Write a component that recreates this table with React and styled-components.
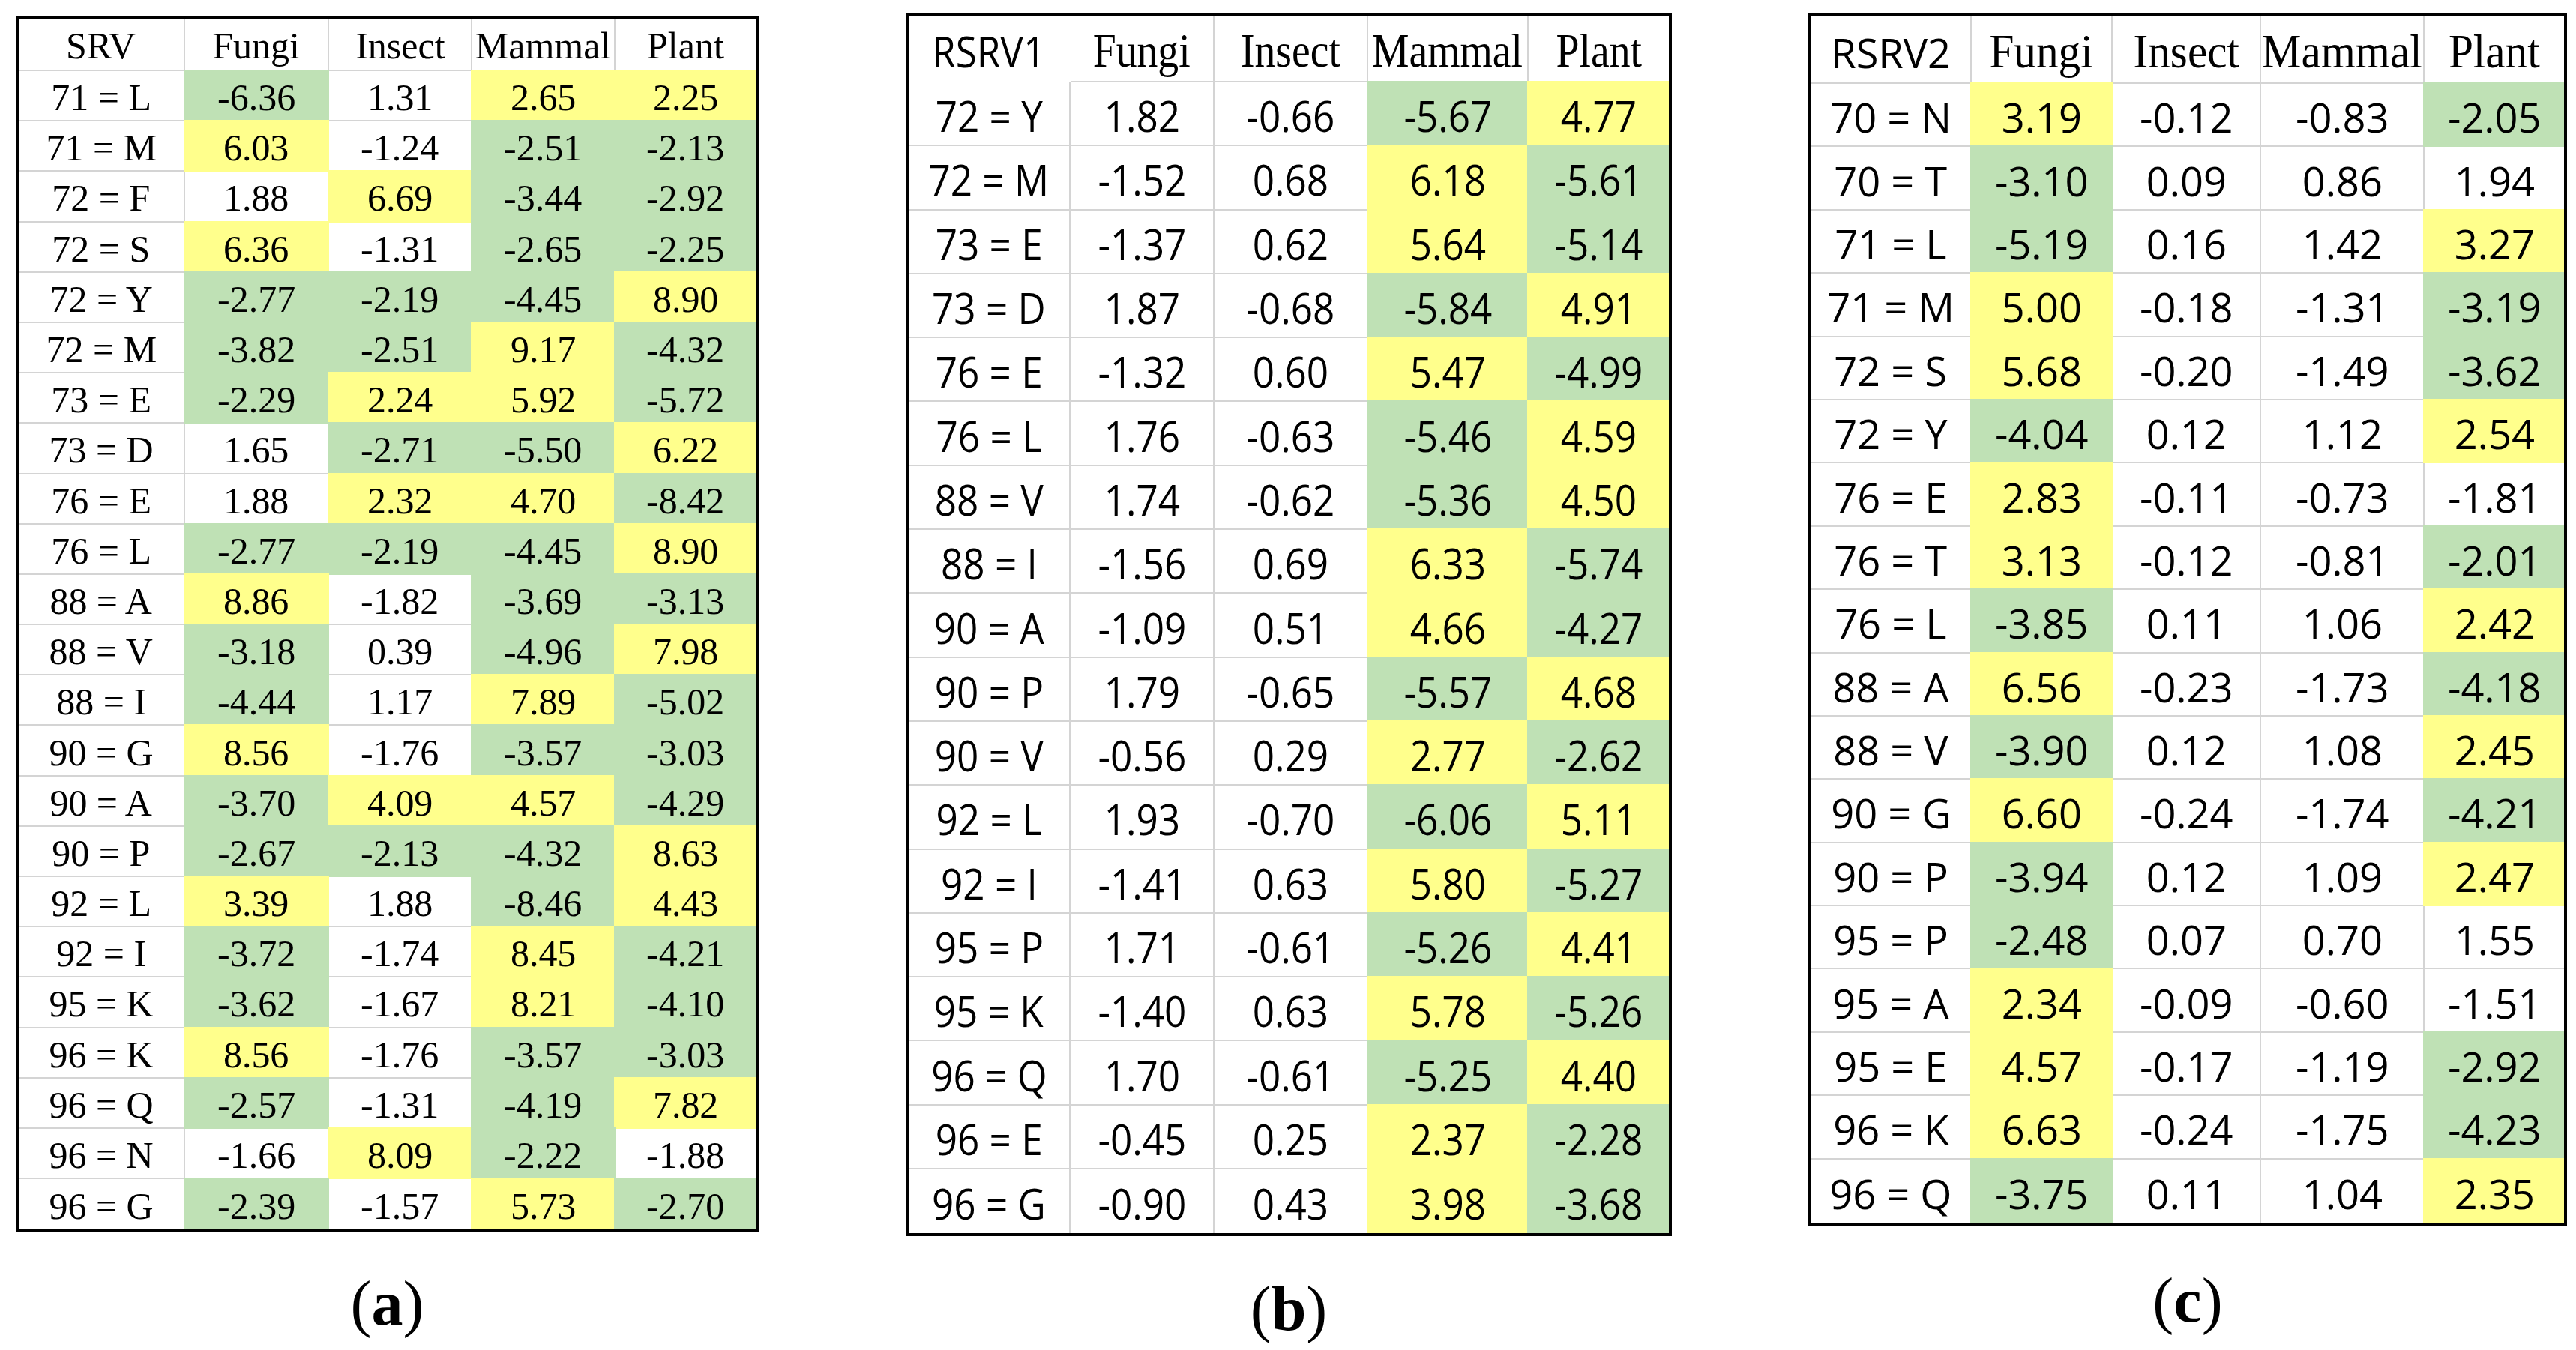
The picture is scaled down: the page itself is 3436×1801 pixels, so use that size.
import React from "react";
import styled, { createGlobalStyle } from "styled-components";

const GlobalStyle = createGlobalStyle`
  html, body {
    margin: 0;
    padding: 0;
    background: #ffffff;
  }
  body {
    width: 3436px;
    height: 1801px;
    overflow: hidden;
  }
`;

const SERIF = `"Liberation Serif", "Times New Roman", serif`;
const SANS = `"Open Sans", Calibri, "Liberation Sans", sans-serif`;

const TONES = { g: "#bfe1b5", y: "#ffff8c", w: "#ffffff" };
const GRID = "#d4d4d4";

// each data cell is "<tone><value>", tone: g = green, y = yellow, w = white
const SRV_ROWS = [
  ["71 = L", "g-6.36 w1.31 y2.65 y2.25"],
  ["71 = M", "y6.03 w-1.24 g-2.51 g-2.13"],
  ["72 = F", "w1.88 y6.69 g-3.44 g-2.92"],
  ["72 = S", "y6.36 w-1.31 g-2.65 g-2.25"],
  ["72 = Y", "g-2.77 g-2.19 g-4.45 y8.90"],
  ["72 = M", "g-3.82 g-2.51 y9.17 g-4.32"],
  ["73 = E", "g-2.29 y2.24 y5.92 g-5.72"],
  ["73 = D", "w1.65 g-2.71 g-5.50 y6.22"],
  ["76 = E", "w1.88 y2.32 y4.70 g-8.42"],
  ["76 = L", "g-2.77 g-2.19 g-4.45 y8.90"],
  ["88 = A", "y8.86 w-1.82 g-3.69 g-3.13"],
  ["88 = V", "g-3.18 w0.39 g-4.96 y7.98"],
  ["88 = I", "g-4.44 w1.17 y7.89 g-5.02"],
  ["90 = G", "y8.56 w-1.76 g-3.57 g-3.03"],
  ["90 = A", "g-3.70 y4.09 y4.57 g-4.29"],
  ["90 = P", "g-2.67 g-2.13 g-4.32 y8.63"],
  ["92 = L", "y3.39 w1.88 g-8.46 y4.43"],
  ["92 = I", "g-3.72 w-1.74 y8.45 g-4.21"],
  ["95 = K", "g-3.62 w-1.67 y8.21 g-4.10"],
  ["96 = K", "y8.56 w-1.76 g-3.57 g-3.03"],
  ["96 = Q", "g-2.57 w-1.31 g-4.19 y7.82"],
  ["96 = N", "w-1.66 y8.09 g-2.22 w-1.88"],
  ["96 = G", "g-2.39 w-1.57 y5.73 g-2.70"],
];

const RSRV1_ROWS = [
  ["72 = Y", "w1.82 w-0.66 g-5.67 y4.77"],
  ["72 = M", "w-1.52 w0.68 y6.18 g-5.61"],
  ["73 = E", "w-1.37 w0.62 y5.64 g-5.14"],
  ["73 = D", "w1.87 w-0.68 g-5.84 y4.91"],
  ["76 = E", "w-1.32 w0.60 y5.47 g-4.99"],
  ["76 = L", "w1.76 w-0.63 g-5.46 y4.59"],
  ["88 = V", "w1.74 w-0.62 g-5.36 y4.50"],
  ["88 = I", "w-1.56 w0.69 y6.33 g-5.74"],
  ["90 = A", "w-1.09 w0.51 y4.66 g-4.27"],
  ["90 = P", "w1.79 w-0.65 g-5.57 y4.68"],
  ["90 = V", "w-0.56 w0.29 y2.77 g-2.62"],
  ["92 = L", "w1.93 w-0.70 g-6.06 y5.11"],
  ["92 = I", "w-1.41 w0.63 y5.80 g-5.27"],
  ["95 = P", "w1.71 w-0.61 g-5.26 y4.41"],
  ["95 = K", "w-1.40 w0.63 y5.78 g-5.26"],
  ["96 = Q", "w1.70 w-0.61 g-5.25 y4.40"],
  ["96 = E", "w-0.45 w0.25 y2.37 g-2.28"],
  ["96 = G", "w-0.90 w0.43 y3.98 g-3.68"],
];

const RSRV2_ROWS = [
  ["70 = N", "y3.19 w-0.12 w-0.83 g-2.05"],
  ["70 = T", "g-3.10 w0.09 w0.86 w1.94"],
  ["71 = L", "g-5.19 w0.16 w1.42 y3.27"],
  ["71 = M", "y5.00 w-0.18 w-1.31 g-3.19"],
  ["72 = S", "y5.68 w-0.20 w-1.49 g-3.62"],
  ["72 = Y", "g-4.04 w0.12 w1.12 y2.54"],
  ["76 = E", "y2.83 w-0.11 w-0.73 w-1.81"],
  ["76 = T", "y3.13 w-0.12 w-0.81 g-2.01"],
  ["76 = L", "g-3.85 w0.11 w1.06 y2.42"],
  ["88 = A", "y6.56 w-0.23 w-1.73 g-4.18"],
  ["88 = V", "g-3.90 w0.12 w1.08 y2.45"],
  ["90 = G", "y6.60 w-0.24 w-1.74 g-4.21"],
  ["90 = P", "g-3.94 w0.12 w1.09 y2.47"],
  ["95 = P", "g-2.48 w0.07 w0.70 w1.55"],
  ["95 = A", "y2.34 w-0.09 w-0.60 w-1.51"],
  ["95 = E", "y4.57 w-0.17 w-1.19 g-2.92"],
  ["96 = K", "y6.63 w-0.24 w-1.75 g-4.23"],
  ["96 = Q", "g-3.75 w0.11 w1.04 y2.35"],
];

const HEADS = ["Fungi", "Insect", "Mammal", "Plant"];

const TABLES = [
  {
    id: "a",
    corner: "SRV",
    rows: SRV_ROWS,
    top: 22,
    left: 0,
    cols: [222, 192, 191, 191, 187],
    head: 69,
    row: 67.2,
    captionGap: 53,
    bareCorner: false,
    cornerText: { family: SERIF, size: 51, sx: 0.98 },
    headText: { family: SERIF, size: 51, sx: 0.98 },
    bodyText: { family: SERIF, size: 51, sx: 0.98 },
    headNudge: 3,
    bodyNudge: 6,
  },
  {
    id: "b",
    corner: "RSRV1",
    rows: RSRV1_ROWS,
    top: 18,
    left: 196,
    cols: [216, 192, 205, 214, 187],
    head: 88,
    row: 85.3,
    captionGap: 55,
    bareCorner: true,
    cornerText: { family: SANS, size: 56, sx: 0.915 },
    headText: { family: SERIF, size: 64, sx: 0.87 },
    bodyText: { family: SANS, size: 56, sx: 0.915 },
    headNudge: 6,
    bodyNudge: 5,
  },
  {
    id: "c",
    corner: "RSRV2",
    rows: RSRV2_ROWS,
    top: 18,
    left: 182,
    cols: [214, 188, 198, 218, 186],
    head: 90,
    row: 84.4,
    captionGap: 58,
    bareCorner: false,
    cornerText: { family: SANS, size: 55, sx: 0.985 },
    headText: { family: SERIF, size: 63, sx: 0.94 },
    bodyText: { family: SANS, size: 55, sx: 0.985 },
    headNudge: 7,
    bodyNudge: 5,
  },
];

const Page = styled.main`
  display: flex;
  align-items: flex-start;
  padding-left: 21px;
`;

const Figure = styled.figure`
  margin: ${({ $top }) => $top}px 0 0 ${({ $left }) => $left}px;
  display: flex;
  flex-direction: column;
  align-items: center;
`;

const Grid = styled.div`
  display: grid;
  grid-template-columns: ${({ $cols }) => $cols.map((c) => `${c}px`).join(" ")};
  grid-template-rows: ${({ $head }) => $head}px;
  grid-auto-rows: ${({ $row }) => $row}px;
  border: 4px solid #000;
  background: #fff;
`;

const edge = (show, tone) => (show && tone === "w" ? GRID : TONES[tone]);

const Cell = styled.div`
  box-sizing: border-box;
  display: flex;
  align-items: center;
  justify-content: center;
  padding-top: ${({ $nudge }) => $nudge}px;
  background: ${({ $tone }) => TONES[$tone]};
  border-right: ${({ $lastCol }) => ($lastCol ? 0 : 2)}px solid
    ${({ $tone, $bare }) => edge(!$bare, $tone)};
  border-bottom: ${({ $lastRow }) => ($lastRow ? 0 : 2)}px solid
    ${({ $tone, $bare }) => edge(!$bare, $tone)};
  box-shadow: ${({ $tone }) =>
    $tone === "w" ? "none" : `-1px -1px 0 1px ${TONES[$tone]}`};
  font-family: ${({ $text }) => $text.family};
  font-size: ${({ $text }) => $text.size}px;
  line-height: 1;
  color: #000;
  white-space: nowrap;
`;

const Label = styled.span`
  display: inline-block;
  transform: scaleX(${({ $sx }) => $sx});
`;

const Caption = styled.figcaption`
  margin-top: ${({ $gap }) => $gap}px;
  font-family: ${SERIF};
  font-size: 84px;
  line-height: 1;
  color: #000;
`;

const Letter = styled.span`
  font-weight: bold;
`;

const DataTable = ({ table }) => {
  const lastCol = table.cols.length - 1;
  const lastRow = table.rows.length - 1;

  return (
    <Grid $cols={table.cols} $head={table.head} $row={table.row}>
      <Cell
        $tone="w"
        $bare={table.bareCorner}
        $text={table.cornerText}
        $nudge={table.headNudge}
      >
        <Label $sx={table.cornerText.sx}>{table.corner}</Label>
      </Cell>
      {HEADS.map((name, i) => (
        <Cell
          key={name}
          $tone="w"
          $lastCol={i + 1 === lastCol}
          $text={table.headText}
          $nudge={table.headNudge}
        >
          <Label $sx={table.headText.sx}>{name}</Label>
        </Cell>
      ))}
      {table.rows.map(([site, values], r) => (
        <React.Fragment key={`${site}-${r}`}>
          <Cell
            $tone="w"
            $lastRow={r === lastRow}
            $text={table.bodyText}
            $nudge={table.bodyNudge}
          >
            <Label $sx={table.bodyText.sx}>{site}</Label>
          </Cell>
          {values.split(" ").map((v, c) => (
            <Cell
              key={c}
              $tone={v[0]}
              $lastCol={c + 1 === lastCol}
              $lastRow={r === lastRow}
              $text={table.bodyText}
              $nudge={table.bodyNudge}
            >
              <Label $sx={table.bodyText.sx}>{v.slice(1)}</Label>
            </Cell>
          ))}
        </React.Fragment>
      ))}
    </Grid>
  );
};

const App = () => {
  return (
    <Page>
      <GlobalStyle />
      {TABLES.map((table) => (
        <Figure key={table.id} $top={table.top} $left={table.left}>
          <DataTable table={table} />
          <Caption $gap={table.captionGap}>
            (<Letter>{table.id}</Letter>)
          </Caption>
        </Figure>
      ))}
    </Page>
  );
};

export default App;
